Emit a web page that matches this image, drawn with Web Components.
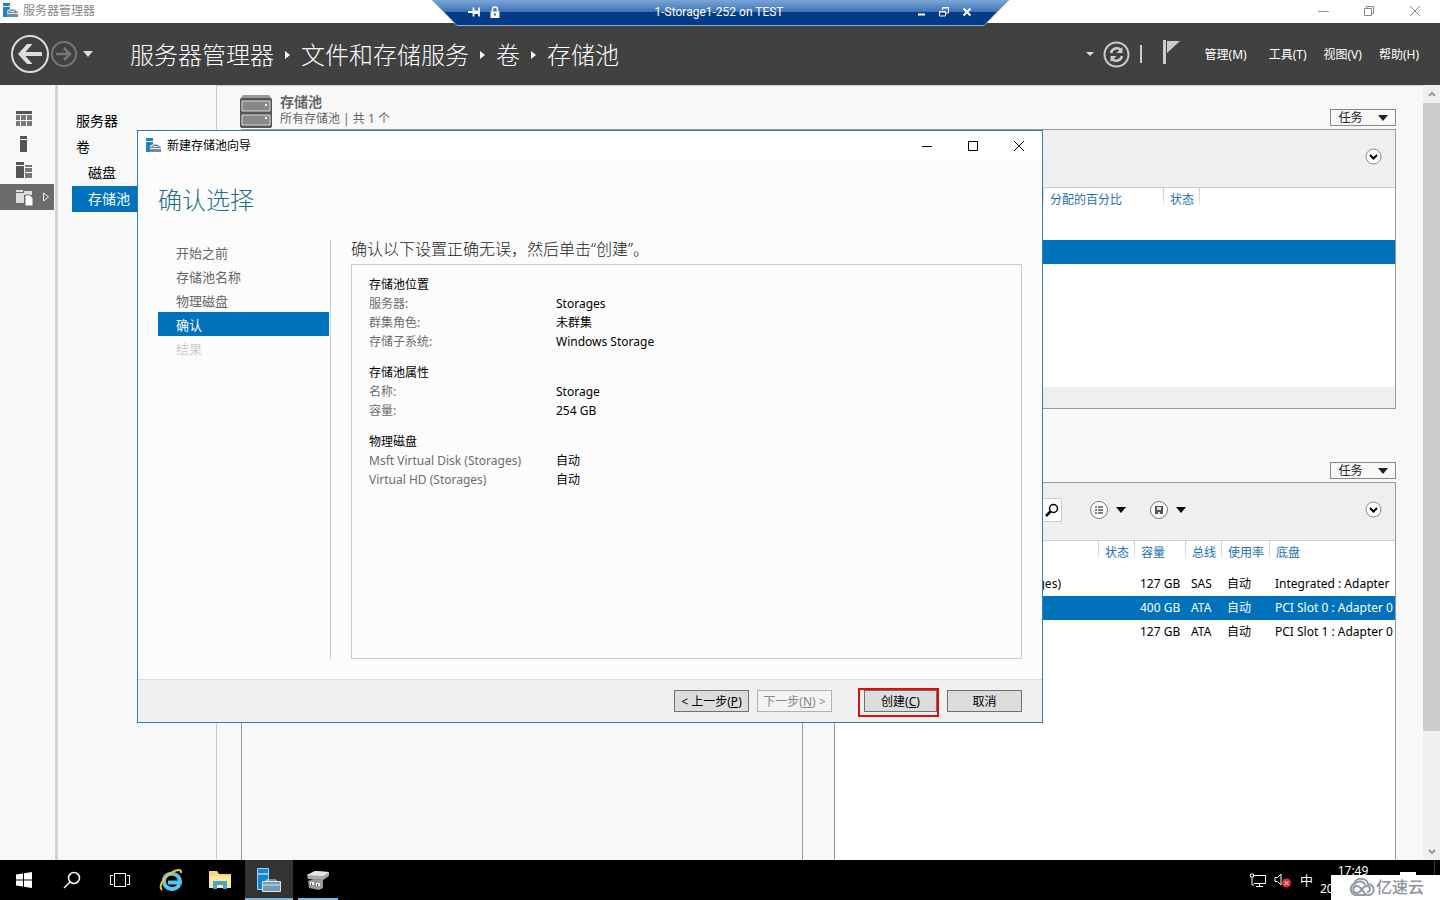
<!DOCTYPE html>
<html lang="zh-CN">
<head>
<meta charset="utf-8">
<title>服务器管理器</title>
<style>
html, body { margin: 0; height: 100%; }
body { font: 12px/19px "Noto Sans", "Noto Sans CJK SC", sans-serif; color: #000; background: #f8f8f8; overflow: hidden; }
</style>
</head>
<body>
<server-desktop></server-desktop>
<script>
const RESET = `*{box-sizing:border-box} button{font:inherit;color:inherit;background:none;border:0;padding:0;margin:0;display:flex;align-items:center;justify-content:center} a{color:inherit;text-decoration:none} svg{display:block;flex:none} ul{list-style:none;margin:0;padding:0} table{border-collapse:separate;border-spacing:0;width:100%;table-layout:fixed} `;
function define(name, css, html) {
  customElements.define(name, class extends HTMLElement {
    constructor() {
      super();
      this.attachShadow({ mode: 'open' }).innerHTML = `<style>${RESET}${css}</style>${html}`;
    }
  });
}

define('app-logo', `:host{display:block;width:15px;height:15px}`, `
<svg width="15" height="15" viewBox="0 0 15 15" aria-hidden="true">
<path d="M0 0h7v3H0zM0 4h7v2L4 8v6H0z" fill="#2181c4"/>
<path d="M4 9.500l3.500-3h4L15 9.500V14H4z" fill="#6f8ca3"/><path d="M7 8.500h4.500M4 10.500h11" fill="none" stroke="#e8f0f5"/>
</svg>`);

define('rdp-bar', `
:host{display:block;width:577px;height:26px;color:#fff;position:relative;font-family:Roboto,"Noto Sans CJK SC",sans-serif}
.shape{position:absolute;inset:0}
.row{position:relative;display:flex;align-items:center;height:24px;padding:0 37px 0 35px}
.title{flex:1;text-align:center;line-height:26px}
.left{display:flex;gap:7px;width:62px}.right{display:flex;gap:13px;width:62px;justify-content:flex-end}
`, `
<svg class="shape" width="577" height="26" viewBox="0 0 577 26" aria-hidden="true">
<defs><linearGradient id="g" x1="0" y1="0" x2="0" y2="1"><stop offset="0" stop-color="#7ba6d8"/><stop offset=".46" stop-color="#3f72b5"/><stop offset=".48" stop-color="#063b87"/><stop offset="1" stop-color="#033a85"/></linearGradient></defs>
<path d="M0 0H577L552 25.500H25z" fill="url(#g)"/><path d="M0 0L25 25.500H552L577 0" fill="none" stroke="#8db0dc"/>
</svg>
<div class="row">
<div class="left">
<button aria-label="固定"><svg width="14" height="14" viewBox="0 0 14 14"><path d="M1 7h5M6.500 2.500v9M6 6.500h6M12 2.500v9M7 8h5" stroke="#fff" stroke-width="1.800" fill="none"/></svg></button>
<button aria-label="连接信息"><svg width="14" height="14" viewBox="0 0 14 14"><path d="M4.500 7V4.500a2.500 2.500 0 0 1 5 0V7" stroke="#fff" stroke-width="1.500" fill="none"/><path d="M2.500 6.500h9v6.500h-9z" fill="#fff"/><path d="M7 8.500v2" stroke="#063b87" stroke-width="1.500"/></svg></button>
</div>
<div class="title">1-Storage1-252 on TEST</div>
<div class="right">
<button aria-label="最小化连接栏"><svg width="10" height="12" viewBox="0 0 10 12"><path d="M2 8.500h7" stroke="#fff" stroke-width="2"/></svg></button>
<button aria-label="还原连接栏"><svg width="10" height="12" viewBox="0 0 10 12"><path d="M3.500 4V1.500h6V7H7M.500 5.500h6V10h-6zM3 2h7M0 6h7" stroke="#fff" fill="none"/></svg></button>
<button aria-label="断开"><svg width="10" height="12" viewBox="0 0 10 12"><path d="M1.500 2.500l7 7M8.500 2.500l-7 7" stroke="#fff" stroke-width="2"/></svg></button>
</div></div>`);

define('title-bar', `
:host{display:flex;align-items:center;height:23px;background:#fff;color:#888;padding:0 19px 2px 3px;gap:5px}
.t{flex:1}.w{display:flex;gap:34px}
`, `<app-logo></app-logo><div class="t">服务器管理器</div><div class="w">
<button aria-label="最小化"><svg width="12" height="12" viewBox="0 0 12 12"><path d="M1 6.500h11" stroke="#999"/></svg></button>
<button aria-label="还原"><svg width="12" height="12" viewBox="0 0 12 12"><path d="M1.500 3.500h7v7h-7zM3.500 3V1.500h7v7H9" stroke="#888" fill="none"/></svg></button>
<button aria-label="关闭"><svg width="12" height="12" viewBox="0 0 12 12"><path d="M1 1l10 10M11 1L1 11" stroke="#888"/></svg></button></div>`);

define('manager-header', `
:host{display:flex;align-items:center;height:62px;background:#414141;color:#fff;padding:0 21px 0 10px}
.back{display:flex;align-items:center;width:120px}
.back .c{margin-left:5px}
nav{flex:1;display:flex;align-items:center;gap:11px;font-size:24px;font-weight:300;line-height:36px;padding-top:1px}
.tools{display:flex;align-items:center;gap:9px}
.flag{margin:0 25px 0 10px}
.menu{display:flex;gap:17px}.menu button:first-child{margin-right:5px}
`, `
<div class="back">
<button aria-label="后退"><svg width="40" height="40" viewBox="0 0 40 40"><circle cx="20" cy="20" r="18" fill="none" stroke="#ddd" stroke-width="2"/><path d="M8 20L17 10h5.500l-7 8H32v4H15.500l7 8H17z" fill="#ddd"/></svg></button>
<button aria-label="前进"><svg width="28" height="28" viewBox="0 0 28 28"><circle cx="14" cy="14" r="12" fill="none" stroke="#777" stroke-width="2"/><path d="M6 14h14M14 8l6 6-6 6" fill="none" stroke="#777" stroke-width="2.500"/></svg></button>
<button class="c" aria-label="历史记录"><svg width="10" height="6" viewBox="0 0 10 6"><path d="M0 0h10L5 6z" fill="#ddd"/></svg></button>
</div>
<nav aria-label="路径"><a href="#sm">服务器管理器</a><svg width="5" height="8"><path d="M0 0l5 4-5 4z" fill="#fff"/></svg><a href="#fs">文件和存储服务</a><svg width="5" height="8"><path d="M0 0l5 4-5 4z" fill="#fff"/></svg><a href="#vol">卷</a><svg width="5" height="8"><path d="M0 0l5 4-5 4z" fill="#fff"/></svg><a href="#pool">存储池</a></nav>
<div class="tools">
<svg width="8" height="5" viewBox="0 0 8 5"><path d="M0 0h8L4 4z" fill="#ddd"/></svg>
<button aria-label="刷新"><svg width="27" height="27" viewBox="0 0 27 27"><circle cx="13.500" cy="13.500" r="12" fill="none" stroke="#ccc" stroke-width="2"/><path d="M8 12c1-5 7-6 10-3M19 15c-1 5-7 6-10 3" fill="none" stroke="#ccc" stroke-width="2.500"/><path d="M19.500 6v6h-6zM7.500 21v-6h6z" fill="#ccc"/></svg></button>
<svg width="4" height="18"><path d="M1 0h2v18H1z" fill="#ccc"/></svg>
<button class="flag" aria-label="通知"><svg width="18" height="28" viewBox="0 0 18 28"><path d="M1 0h3v24H1zM5 1h13L5 13z" fill="#ccc"/></svg></button>
</div>
<div class="menu"><button>管理(M)</button><button>工具(T)</button><button>视图(V)</button><button>帮助(H)</button></div>`);

define('icon-rail', `
:host{display:block;width:58px;padding-top:21px;border-right:3px solid #d4d4d4;background:#f8f8f8}
a{display:flex;align-items:center;height:26px;padding:0 0 2px 16px;gap:10px;width:54px}
a.on{background:#6b6b6b;padding-bottom:0}
`, `<nav aria-label="角色">
<a href="#dash" aria-label="仪表板"><svg width="16" height="16" viewBox="0 0 16 16"><path d="M0 1h16v3H0z" fill="#555"/><path d="M0 5h4v5H0zM5 5h5v5H5zM11 5h5v5h-5zM0 11h4v5H0zM5 11h5v5H5zM11 11h5v5h-5z" fill="#777"/></svg></a>
<a href="#local" aria-label="本地服务器"><svg width="16" height="16" viewBox="0 0 16 16"><path d="M4 0h7v3H4zM4 4h7v12H4z" fill="#555"/></svg></a>
<a href="#all" aria-label="所有服务器"><svg width="16" height="16" viewBox="0 0 16 16"><path d="M0 0h8v3H0zM0 4h8v12H0z" fill="#555"/><path d="M9 3h7v2H9zM9 6h7v4H9zM9 11h7v5H9z" fill="#777"/></svg></a>
<a href="#files" class="on" aria-label="文件和存储服务"><svg width="17" height="17" viewBox="0 0 17 17"><path d="M0 1h7v2H0zM0 4h8v10H0zM8 2h8v4H8z" fill="#ddd"/><path d="M9 6h5l3 3v8H9z" fill="#fff" stroke="#6b6b6b"/></svg><svg width="7" height="10" viewBox="0 0 7 10"><path d="M.500 1l5 4-5 4z" fill="none" stroke="#eee"/></svg></a>
</nav>`);

define('side-nav', `
:host{display:block;width:159px;padding:23px 0 0 14px;border-right:1px solid #ccc;background:#f8f8f8;font-size:14px}
a{display:block;height:26px;line-height:26px;padding-left:4px}
a.sub{padding-left:16px}.on{background:#0072bc;color:#fff}
`, `<nav aria-label="文件和存储服务"><a href="#servers">服务器</a><a href="#volumes">卷</a><a href="#disks" class="sub">磁盘</a><a href="#pools" class="sub on">存储池</a></nav>`);

define('storage-tile', `
:host{display:flex;flex-direction:column;min-width:0}
header{display:flex;align-items:flex-end;justify-content:space-between;height:44px;flex:none}
.tasks{width:66px;height:17px;border:1px solid #888;background:#f8f8f8;gap:15px;margin-bottom:3px;line-height:15px;color:#222}
.panel{flex:1;display:flex;flex-direction:column;border:1px solid #999;background:var(--panel,#fff);overflow:hidden}
:host([open-end]) .panel{border-bottom:0}
:host([plain]) .tasks,:host([plain]) .bar{display:none}
.bar{display:flex;align-items:center;justify-content:space-between;height:58px;flex:none;background:#efefef;border-bottom:1px solid #ccc;padding:0 13px 4px 14px}
`, `<header><slot name="title"><span></span></slot><button class="tasks">任务<svg width="10" height="6" viewBox="0 0 10 6"><path d="M0 0h10L5 6z" fill="#222"/></svg></button></header>
<div class="panel"><div class="bar"><slot name="tools"><span></span></slot>
<button aria-label="展开"><svg width="17" height="17" viewBox="0 0 17 17"><circle cx="8.500" cy="8.500" r="7.500" fill="#fff" stroke="#888"/><path d="M5 7l3.500 3.500L12 7" fill="none" stroke="#000" stroke-width="2"/></svg></button></div><slot></slot></div>`);

define('tile-title', `
:host{display:flex;gap:8px;color:#666;height:36px;margin-left:-1px}
h2{margin:0;font-size:14px;line-height:18px}p{margin:0;line-height:16px}
svg{margin-top:2px}
`, `<svg width="32" height="33" viewBox="0 0 32 33" aria-hidden="true"><path d="M3 0h26l3 4H0z" fill="#999"/><rect y="3" width="32" height="30" rx="2" fill="#555"/><path d="M2 6h28v10H2zM2 20h28v10H2z" fill="#888" stroke="#ddd"/><path d="M25 9h2v2h-2zM25 22h2v2h-2z" fill="#fff"/></svg>
<div><h2>存储池</h2><p>所有存储池 | 共 1 个</p></div>`);

const TABLE = `
th{height:24px;padding:0 0 1px 6px;font-weight:400;text-align:left;color:#1a6fb5;white-space:nowrap;background:linear-gradient(#ccc,#e4e4e4) right top/1px 17px no-repeat}
th:last-child{background:none}
td{height:24px;padding:0 0 2px 5px;white-space:nowrap}
tr.gap td{height:var(--gap);padding:0}
.on td{background:#0072bc;color:#fff}`;

define('pool-table', `:host{display:flex;flex-direction:column;flex:1;--gap:28px}${TABLE}
.foot{margin-top:auto;height:21px;background:#efefef}`, `
<table><colgroup><col><col style="width:120px"><col style="width:36px"><col style="width:195px"></colgroup>
<thead><tr><th></th><th>分配的百分比</th><th>状态</th><th></th></tr></thead>
<tbody><tr class="gap"><td colspan="4"></td></tr><tr class="on"><td></td><td></td><td></td><td></td></tr></tbody></table>
<div class="foot"></div>`);

define('disk-table', `:host{display:block;flex:1;--gap:7px}${TABLE}
td:first-child{text-align:right;padding-right:38px}`, `
<table><colgroup><col><col style="width:36px"><col style="width:51px"><col style="width:36px"><col style="width:48px"><col style="width:125px"></colgroup>
<thead><tr><th></th><th>状态</th><th>容量</th><th>总线</th><th>使用率</th><th>底盘</th></tr></thead>
<tbody><tr class="gap"><td colspan="6"></td></tr>
<tr><td>Msft Virtual Disk (Storages)</td><td></td><td>127 GB</td><td>SAS</td><td>自动</td><td>Integrated : Adapter</td></tr>
<tr class="on"><td></td><td></td><td>400 GB</td><td>ATA</td><td>自动</td><td>PCI Slot 0 : Adapter 0</td></tr>
<tr><td></td><td></td><td>127 GB</td><td>ATA</td><td>自动</td><td>PCI Slot 1 : Adapter 0</td></tr></tbody></table>`);

define('filter-tools', `
:host{display:flex;align-items:center}
.search{display:flex;align-items:center;width:213px;height:24px;background:#fff;border:1px solid #ccc;padding-right:2px;margin-right:28px}
input{flex:1;min-width:0;border:0;outline:0;font:inherit;background:none}
.m{gap:8px;margin-right:24px}
`, `<div class="search"><input type="search" aria-label="筛选器"><svg width="14" height="14" viewBox="0 0 14 14"><circle cx="8.500" cy="5.500" r="4" fill="none" stroke="#000" stroke-width="1.500"/><path d="M5.500 8.500L1 13" stroke="#000" stroke-width="2.500"/></svg></div>
<button class="m" aria-label="筛选条件"><svg width="18" height="18" viewBox="0 0 18 18"><circle cx="9" cy="9" r="8.500" fill="#fff" stroke="#777"/><path d="M5 6h2M8 6h5M5 9h2M8 9h5M5 12h2M8 12h5" stroke="#555" stroke-width="1.500"/></svg><svg width="10" height="6"><path d="M0 0h10L5 6z"/></svg></button>
<button class="m" aria-label="保存查询"><svg width="18" height="18" viewBox="0 0 18 18"><circle cx="9" cy="9" r="8.500" fill="#fff" stroke="#777"/><path d="M5 5h8v8H5z" fill="#555"/><path d="M7 6h4v3H7zM8 11h2v2H8z" fill="#ddd"/></svg><svg width="10" height="6"><path d="M0 0h10L5 6z"/></svg></button>`);

define('page-scroll', `:host{display:flex;flex-direction:column;width:17px;background:#f0f0f0}
button{height:17px}.thumb{margin-top:1px;height:81%;background:#cdcdcd}.sp{flex:1}`, `
<button aria-label="向上滚动"><svg width="8" height="6"><path d="M1 5l3-3 3 3" fill="none" stroke="#999" stroke-width="2"/></svg></button><div class="thumb"></div><div class="sp"></div>
<button aria-label="向下滚动"><svg width="8" height="6"><path d="M1 1l3 3 3-3" fill="none" stroke="#999" stroke-width="2"/></svg></button>`);

define('summary-group', `:host{display:block;margin-bottom:12px}
h3{margin:0;font-size:12px;font-weight:400;line-height:19px}`, `<h3><slot name="heading"></slot></h3><slot></slot>`);
define('summary-row', `:host{display:flex;line-height:19px}
.k{width:187px;color:#6d6d6d}`, `<div class="k"><slot name="label"></slot></div><div><slot></slot></div>`);

define('pool-wizard', `
:host{display:flex;flex-direction:column;background:#fcfcfc;border:1px solid #2a7fc0}
.cap{display:flex;align-items:center;height:29px;background:#fff;padding:0 17px 0 8px;gap:6px}
.cap div{flex:1}.cap button+button{margin-left:28px}
h1{margin:0;padding:23px 20px 0;font-size:24px;font-weight:300;line-height:34px;color:#1f6f8b}
.body{flex:1;display:flex;padding:23px 20px 20px;gap:20px}
.steps{width:173px;border-right:1px solid #ccc;padding-right:1px;font-size:13px;color:#666}
li{height:24px;line-height:26px;padding-left:18px}
li.on{background:#0072bc;color:#fff}li.off{color:#ccc}
.main{flex:1;display:flex;flex-direction:column}
p{margin:0;font-size:16px;font-weight:300;line-height:19px;color:#222}
.box{flex:1;margin-top:5px;border:1px solid #ccc;padding:10px 17px 0}
footer{display:flex;align-items:center;justify-content:flex-end;height:43px;background:#f0f0f0;border-top:1px solid #ddd;padding-right:20px;gap:8px}
footer button{width:75px;height:22px;background:#ddd;border:1px solid #707070;white-space:pre}
footer button:disabled{background:#f4f4f4;border-color:#adb2b5;color:#888}
.mark{border:2px solid #e00b0b;height:29px;padding-left:4px;margin:8px 0 0 18px;align-self:flex-start}.mark button{width:73px}
`, `
<div class="cap"><app-logo></app-logo><div>新建存储池向导</div>
<button aria-label="最小化"><svg width="12" height="12" viewBox="0 0 12 12"><path d="M1 6.500h10" stroke="#000"/></svg></button>
<button aria-label="最大化"><svg width="12" height="12" viewBox="0 0 12 12"><path d="M1.500 1.500h9v9h-9z" fill="none" stroke="#000"/></svg></button>
<button aria-label="关闭"><svg width="12" height="12" viewBox="0 0 12 12"><path d="M1 1l10 10M11 1L1 11" stroke="#000"/></svg></button></div>
<h1>确认选择</h1>
<div class="body"><ul class="steps"><li>开始之前</li><li>存储池名称</li><li>物理磁盘</li><li class="on" aria-current="step">确认</li><li class="off">结果</li></ul>
<div class="main"><p>确认以下设置正确无误，然后单击“创建”。</p><div class="box"><slot></slot></div></div></div>
<footer><button>&lt; 上一步(<u>P</u>)</button><button disabled>下一步(<u>N</u>) &gt;</button><div class="mark"><button>创建(<u>C</u>)</button></div><button>取消</button></footer>`);

define('task-bar', `
:host{display:flex;height:40px;background:#000;color:#fff}
button{width:48px;height:40px}
.app{margin-left:1px;border-bottom:2px solid transparent;padding-top:2px}
.first{margin-left:3px}
.cur{background:#333;border-bottom-color:#76b9ed}
.run{width:40px;margin-left:5px;border-bottom-color:#76b9ed}
.sp{flex:1}
.tray{display:flex;align-items:center;gap:8px;font-size:13px}
.clock{width:66px;font-size:12px;line-height:18px;padding-top:2px;margin-left:7px}
.clock time{display:block;text-align:center}
.note{width:49px}
`, `
<button aria-label="开始"><svg width="16" height="16" viewBox="0 0 16 16"><path d="M0 2.500L7 1.500v6H0zM8 1.300L16 0v7.500H8zM0 8.500h7v6L0 13.500zM8 8.500h8V16l-8-1.300z" fill="#fff"/></svg></button>
<button aria-label="搜索"><svg width="18" height="18" viewBox="0 0 18 18"><circle cx="11" cy="7" r="5.500" fill="none" stroke="#fff" stroke-width="1.500"/><path d="M7 11l-6 6" stroke="#fff" stroke-width="1.500"/></svg></button>
<button aria-label="任务视图"><svg width="20" height="16" viewBox="0 0 20 16"><path d="M4.500 1.500h11v13h-11zM3 3.500H.500v9H3M17 3.500h2.500v9H17" fill="none" stroke="#fff"/></svg></button>
<button class="app first" aria-label="Internet Explorer"><svg width="24" height="24" viewBox="0 0 24 24"><path d="M20.500 16.500C17 23.500 5 22 5 13c0-10 16-10 16 1.500H9" fill="none" stroke="#5cc4f4" stroke-width="4"/><path d="M3 22c-4-4 2-13 9-17 6-4 11-4 10 0" fill="none" stroke="#f5c518" stroke-width="2"/></svg></button>
<button class="app" aria-label="文件资源管理器"><svg width="22" height="20" viewBox="0 0 22 20"><path d="M0 1h8l2 3h12v14H0z" fill="#f8d775"/><path d="M0 6h22v12H0z" fill="#ffe79c"/><path d="M4 19v-8h14v8h-4v-4H8v4z" fill="#3fa9dc"/></svg></button>
<button class="app cur" aria-label="服务器管理器"><svg width="24" height="24" viewBox="0 0 24 24"><path d="M.500.500h11v21H.500z" fill="#1684d0" stroke="#9fd3f5"/><path d="M1 6h10" stroke="#fff"/><path d="M9 12h10v3H9z" fill="none" stroke="#cde"/><path d="M5.500 13.500h18v10h-18z" fill="#7b98b0" stroke="#d7e6f2"/><path d="M6 17h17" stroke="#d7e6f2"/></svg></button>
<button class="app run" aria-label="存储"><svg width="22" height="20" viewBox="0 0 22 20"><path d="M0 5l8-4 14 1v4l-6 4L1 9z" fill="#aaa"/><path d="M0 5l8-4 14 1-6 4z" fill="#e4e4e4"/><path d="M1 11l6-2 9 1v8l-4 2-10-2z" fill="#999"/><path d="M3 12h4v3H3zM9 13h4v3H9z" fill="#eee"/><path d="M4 13h1v2H4zM10 14h1v2h-1z" fill="#444"/></svg></button>
<div class="sp"></div>
<div class="tray">
<svg width="16" height="15" viewBox="0 0 16 15"><path d="M4 2.500h11.500v8H4M.500 1v3h3V1zM2 4v8h2M9.500 10v3M6 13.500h7" fill="none" stroke="#fff"/></svg>
<svg width="18" height="16" viewBox="0 0 18 16"><path d="M1 5.500h2.500L7 2v11L3.500 9.500H1z" fill="none" stroke="#fff"/><circle cx="12.500" cy="11" r="4.500" fill="#e02b35"/><path d="M10.500 9l4 4M14.500 9l-4 4" stroke="#fff"/></svg>
<span>中</span></div>
<div class="clock"><time>17:49</time><span>20</span></div>
<div class="note"><svg width="49" height="40" viewBox="0 0 49 40"><path d="M14 12h16v9H14z" fill="#fff"/><path d="M49 0v40" stroke="#777"/></svg></div>
<svg width="5" height="40"></svg>`);

define('brand-mark', `:host{display:flex;align-items:center;justify-content:center;gap:1px;width:109px;height:25px;background:#fff;color:#8c919f;font-size:16px;font-weight:500;line-height:25px}`, `
<svg width="28" height="20" viewBox="0 0 28 20" aria-hidden="true"><path d="M19 17H8a6 6 0 0 1-1-11c1-7 13-7 14 0 8 1 7 11 0 11-5 0-6-9-11-9-5 0-5 7 0 7 4 0 5-7 10-7 4 0 4 6 0 6M8 6c3-4 9-3 10 1" fill="none" stroke="#959aa8" stroke-width="2"/></svg><span>亿速云</span>`);

define('server-desktop', `
:host{display:flex;flex-direction:column;height:100vh;position:relative;overflow:hidden}
rdp-bar{position:absolute;top:0;left:0;right:0;margin:0 auto}
.work{flex:1;min-height:0;display:flex;box-shadow:inset 0 1px #ccc}
.content{flex:1;min-width:0;display:flex;flex-direction:column;padding:0 27px 0 24px}
.top{height:324px;flex:none}
.low{flex:1;display:grid;grid-template-columns:minmax(0,1fr) minmax(0,1fr);gap:31px;margin-top:29px}
.left{--panel:#f8f8f8}
pool-wizard{position:absolute;top:130px;left:137px;right:397px;bottom:177px}
brand-mark{position:absolute;right:0;bottom:0}
`, `
<title-bar></title-bar><manager-header></manager-header>
<div class="work"><icon-rail></icon-rail><side-nav></side-nav>
<main class="content">
<storage-tile class="top"><tile-title slot="title"></tile-title><pool-table></pool-table></storage-tile>
<div class="low"><storage-tile class="left" plain open-end></storage-tile>
<storage-tile open-end><filter-tools slot="tools"></filter-tools><disk-table></disk-table></storage-tile></div>
</main><page-scroll></page-scroll></div>
<task-bar></task-bar>
<pool-wizard role="dialog" aria-label="新建存储池向导">
<summary-group><span slot="heading">存储池位置</span>
<summary-row><span slot="label">服务器:</span>Storages</summary-row>
<summary-row><span slot="label">群集角色:</span>未群集</summary-row>
<summary-row><span slot="label">存储子系统:</span>Windows Storage</summary-row></summary-group>
<summary-group><span slot="heading">存储池属性</span>
<summary-row><span slot="label">名称:</span>Storage</summary-row>
<summary-row><span slot="label">容量:</span>254 GB</summary-row></summary-group>
<summary-group><span slot="heading">物理磁盘</span>
<summary-row><span slot="label">Msft Virtual Disk (Storages)</span>自动</summary-row>
<summary-row><span slot="label">Virtual HD (Storages)</span>自动</summary-row></summary-group>
</pool-wizard>
<rdp-bar></rdp-bar><brand-mark></brand-mark>`);
</script>
</body>
</html>
